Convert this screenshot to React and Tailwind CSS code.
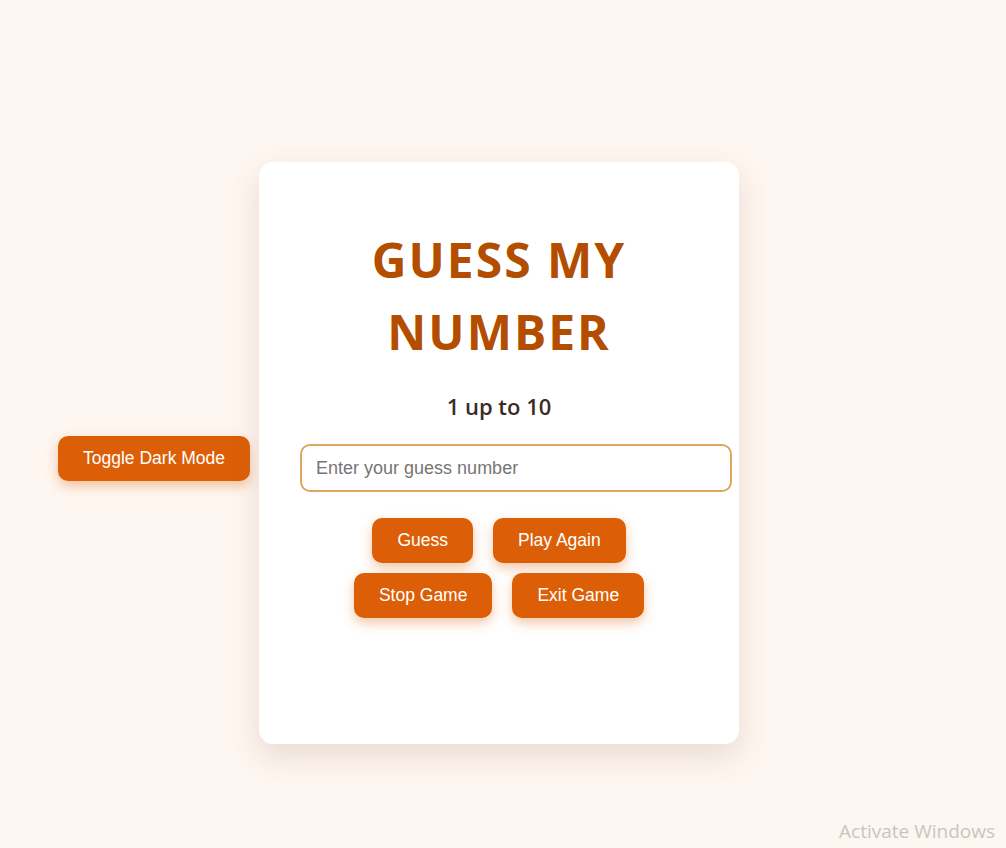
import { useState } from 'react';

export default function App() {
  const [guess, setGuess] = useState('');

  const btn =
    "rounded-[10px] bg-[#dc5f07] text-white text-[17.5px] leading-[21px] py-3 px-[25px] shadow-[0_5px_12px_rgba(220,95,7,0.35)] font-['Liberation_Sans',Arial,sans-serif]";

  return (
    <div className="relative min-h-[848px] w-full bg-[#fef6f0] overflow-hidden">
      <div className="flex items-start pt-[162px] pl-[58px] gap-[9px]">
        <button className={`${btn} mt-[274px]`}>Toggle Dark Mode</button>

        <div className="w-[480px] h-[582px] rounded-[14px] bg-white shadow-[0_12px_30px_rgba(120,90,60,0.16)] pt-[62px] flex flex-col items-center">
          <h1 className="text-center text-[48px] leading-[72px] font-bold tracking-[2px] text-[#b34d00] font-['Open_Sans',sans-serif] w-[300px]">
            GUESS MY NUMBER
          </h1>

          <p className="mt-[22px] text-[22px] leading-[33px] font-semibold text-[#3d2b1f] font-['Open_Sans',sans-serif]">
            1 up to 10
          </p>

          <input
            value={guess}
            onChange={(e) => setGuess(e.target.value)}
            placeholder="Enter your guess number"
            className="self-start ml-[41px] mt-[21px] w-[432px] h-[48px] rounded-[10px] border-2 border-[#dfa65f] px-[14px] text-[18px] text-[#333] placeholder:text-[#757575] outline-none font-['Liberation_Sans',Arial,sans-serif]"
          />

          <div className="mt-[26px] flex flex-col items-center gap-[10px]">
            <div className="flex gap-5">
              <button className={btn}>Guess</button>
              <button className={btn}>Play Again</button>
            </div>
            <div className="flex gap-5">
              <button className={btn}>Stop Game</button>
              <button className={btn}>Exit Game</button>
            </div>
          </div>
        </div>
      </div>

      <div className="absolute right-[11px] bottom-[3px] text-[19px] text-[#c9c5c1] font-['Open_Sans',sans-serif]">
        Activate Windows
      </div>
    </div>
  );
}
